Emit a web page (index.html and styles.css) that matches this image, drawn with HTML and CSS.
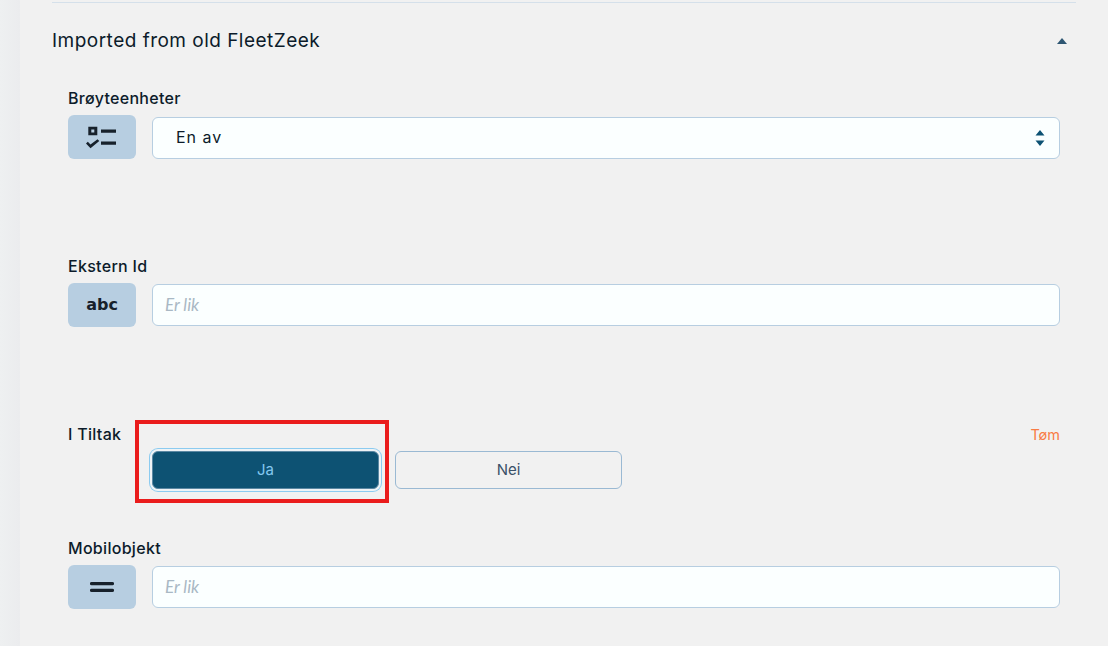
FILE: index.html
```html
<!DOCTYPE html>
<html lang="en">
<head>
    <meta charset="UTF-8">
    <title>Filter</title>
    <link rel="stylesheet" href="styles.css">
</head>
<body>
    <div class="page">
        <div class="rail"></div>
        <div class="content">
            <div class="section-head">
                <h2>Imported from old FleetZeek</h2>
                <svg class="caret" width="10" height="6" viewBox="0 0 10 6"><path d="M5 0 10 6H0z"/></svg>
            </div>
            <div class="fields">
                <div class="field field-tall">
                    <label>Brøyteenheter</label>
                    <div class="input-row">
                        <div class="type-icon">
                            <svg width="32" height="24" viewBox="0 0 32 24">
                                <path fill-rule="evenodd" d="M2.300 1.700h9v8.500h-9zM5.300 4.500v3h3v-3z"/>
                                <path d="M15 4.500h15v3.200H15zM15 16.500h15v3.200H15z"/>
                                <path d="M0 18.600l1.800-1.800 2.700 2.700 7-5.200 1.800 1.800-8.800 7.200z"/>
                            </svg>
                        </div>
                        <div class="select">
                            <span>En av</span>
                            <svg width="10" height="16" viewBox="0 0 10 16"><path d="M5 0 9.500 5.500H.5zM5 16 .5 10.500h9z"/></svg>
                        </div>
                    </div>
                </div>
                <div class="field field-tall">
                    <label>Ekstern Id</label>
                    <div class="input-row">
                        <div class="type-icon abc">abc</div>
                        <input type="text" placeholder="Er lik">
                    </div>
                </div>
                <div class="field field-bool">
                    <label>I Tiltak</label>
                    <div class="toggle">
                        <button class="active">Ja</button>
                        <button>Nei</button>
                    </div>
                    <a class="clear">Tøm</a>
                </div>
                <div class="field">
                    <label>Mobilobjekt</label>
                    <div class="input-row">
                        <div class="type-icon">
                            <svg width="24" height="10" viewBox="0 0 24 10"><path d="M1.500 0h21a1.500 1.500 0 0 1 0 3.200h-21a1.500 1.500 0 0 1 0-3.200zM1.500 6.800h21a1.500 1.500 0 0 1 0 3.200h-21a1.500 1.500 0 0 1 0-3.200z"/></svg>
                        </div>
                        <input type="text" placeholder="Er lik">
                    </div>
                </div>
            </div>
        </div>
    </div>
    <div class="highlight"></div>
</body>
</html>
```

FILE: styles.css
```css
html, body { margin: 0; height: 100%; }
body { background: #f1f1f1; font-family: Inter, "Open Sans", sans-serif; color: #0c1b2a; overflow: hidden; }
.page { display: flex; height: 646px; }
.rail { width: 20px; flex: none; background: linear-gradient(to right, #eef0f1, #ebecee); }
.content { flex: 1; padding: 2px 32px 0; }

.section-head { display: flex; justify-content: space-between; align-items: center; height: 76px; margin-bottom: 9px; border-top: 1px solid #d5e0ea; padding-right: 9px; box-sizing: border-box; }
.section-head h2 { margin: 0; font-size: 19px; font-weight: 400; letter-spacing: 0.48px; color: #0c1b2a; }
.caret { fill: #2e5672; }

.fields { padding: 0 16px; }
.field { position: relative; }
.field-tall { height: 168px; }
.field-bool { height: 114px; }
.field label { display: block; height: 30px; line-height: 22px; font-size: 16px; font-weight: 500; letter-spacing: 0.3px; }

.input-row { display: flex; gap: 16px; align-items: flex-end; height: 44px; margin-top: -2px; }
.type-icon { display: flex; align-items: center; justify-content: center; flex: none; width: 68px; height: 44px; background: #b7cee1; border-radius: 6px; }
.type-icon svg { fill: #17212b; }
.abc { font-family: "DejaVu Sans", sans-serif; font-weight: 700; font-size: 16px; padding-bottom: 2px; height: 42px; color: #17212b; }

.select, input { flex: 1; height: 42px; box-sizing: border-box; background: #fbffff; border: 1px solid #b7cee1; border-radius: 6px; }
.select { display: flex; align-items: center; justify-content: space-between; padding: 0 14px 2px 23px; font-size: 16px; letter-spacing: 1px; }
.select svg { fill: #0d5273; margin-top: 2px; }
input { align-self: center; padding: 0 12px 1px; font-size: 17px; font-family: inherit; }
input::placeholder { font-family: Lato, sans-serif; font-style: italic; color: #a9b8c4; opacity: 1; }

.toggle { display: flex; gap: 16px; padding-left: 84px; margin-top: -2px; }
.toggle button { width: 227px; height: 38px; padding-bottom: 3px; border: 1px solid #9ab9d3; border-radius: 6px; background: transparent; font-family: inherit; font-size: 15px; color: #3a5068; }
.toggle .active { background: #0d5273; color: #84c8ef; border-color: #5a88a3; box-shadow: 0 0 0 2px #eef3f6, 0 0 0 3px #8ccbf0; }
.clear { position: absolute; right: 0; top: 3px; font-size: 14.500px; color: #f97c45; }

.highlight { position: absolute; left: 135px; top: 420px; width: 254px; height: 83px; box-sizing: border-box; border: 4px solid #ea1c1c; }
```
